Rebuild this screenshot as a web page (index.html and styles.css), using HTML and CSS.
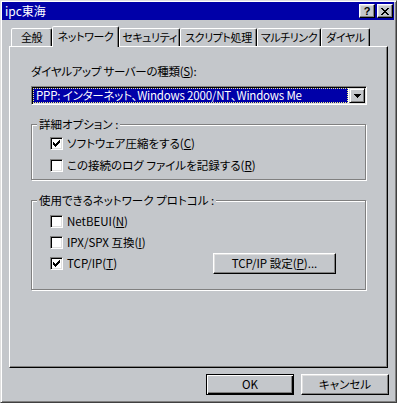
FILE: index.html
```html
<!DOCTYPE html>
<html lang="ja">
<head>
    <meta charset="UTF-8">
    <title>ipc東海</title>
    <link rel="stylesheet" href="styles.css">
</head>
<body>
    <div class="window">
        <div class="titlebar">
            <span class="title">ipc東海</span>
            <div class="title-buttons">
                <button class="tbtn help">?</button>
                <button class="tbtn close">
                    <svg width="8" height="7" viewBox="0 0 8 7">
                        <path d="M0 0h2v1H0z M6 0h2v1H6z M1 1h2v1H1z M5 1h2v1H5z M2 2h4v1H2z M3 3h2v1H3z M2 4h4v1H2z M1 5h2v1H1z M5 5h2v1H5z M0 6h2v1H0z M6 6h2v1H6z" fill="#000"/>
                    </svg>
                </button>
            </div>
        </div>

        <div class="content">
            <div class="tabs">
                <div class="tab">全般</div>
                <div class="tab active">ネットワーク</div>
                <div class="tab">セキュリティ</div>
                <div class="tab">スクリプト処理</div>
                <div class="tab">マルチリンク</div>
                <div class="tab">ダイヤル</div>
            </div>

            <div class="panel">
                <div class="field-label">ダイヤルアップ サーバーの種類(<u>S</u>):</div>
                <div class="combo">
                    <div class="combo-value">PPP: インターネット、Windows 2000/NT、Windows Me</div>
                    <div class="combo-btn">
                        <svg width="7" height="4" viewBox="0 0 7 4">
                            <path d="M0 0h7v1H0z M1 1h5v1H1z M2 2h3v1H2z M3 3h1v1H3z" fill="#000"/>
                        </svg>
                    </div>
                </div>

                <fieldset class="group group-options">
                    <legend>詳細オプション :</legend>
                    <label class="check">
                        <span class="box"><svg width="13" height="13" viewBox="0 0 13 13"><path d="M3 5h1v3H3z M4 6h1v3H4z M5 7h1v3H5z M6 6h1v3H6z M7 5h1v3H7z M8 4h1v3H8z M9 3h1v3H9z" fill="#000"/></svg></span>
                        ソフトウェア圧縮をする(<u>C</u>)
                    </label>
                    <label class="check">
                        <span class="box"></span>
                        この接続のログ ファイルを記録する(<u>R</u>)
                    </label>
                </fieldset>

                <fieldset class="group group-protocols">
                    <legend>使用できるネットワーク プロトコル :</legend>
                    <label class="check">
                        <span class="box"></span>
                        NetBEUI(<u>N</u>)
                    </label>
                    <label class="check">
                        <span class="box"></span>
                        IPX/SPX 互換(<u>I</u>)
                    </label>
                    <div class="check">
                        <span class="box"><svg width="13" height="13" viewBox="0 0 13 13"><path d="M3 5h1v3H3z M4 6h1v3H4z M5 7h1v3H5z M6 6h1v3H6z M7 5h1v3H7z M8 4h1v3H8z M9 3h1v3H9z" fill="#000"/></svg></span>
                        TCP/IP(<u>T</u>)
                        <button class="btn btn-settings">TCP/IP 設定(<u>P</u>)...</button>
                    </div>
                </fieldset>
            </div>

            <div class="actions">
                <button class="btn default">OK</button>
                <button class="btn">キャンセル</button>
            </div>
        </div>
    </div>
</body>
</html>
```

FILE: styles.css
```css
* {
    margin: 0;
    padding: 0;
    box-sizing: border-box;
}

body {
    background: #c4c7cb;
    font-family: "Noto Sans CJK JP", "Liberation Sans", sans-serif;
    font-size: 11.5px;
    color: #000;
    font-feature-settings: "palt";
}

.window {
    width: 397px;
    height: 403px;
    background: #c4c7cb;
    border: 1px solid;
    border-color: #dfdfdf #404040 #404040 #dfdfdf;
    box-shadow: inset 1px 1px #fff, inset -1px -1px #808080;
    padding: 1px 2px 2px 1px;
}

.titlebar {
    height: 18px;
    background: #0000a8;
    color: #fff;
    display: flex;
    align-items: center;
    justify-content: space-between;
    padding: 0 1px 0 3px;
}

.title {
    font-size: 12px;
    line-height: 18px;
}

.title-buttons {
    display: flex;
    gap: 2px;
}

.tbtn {
    width: 16px;
    height: 14px;
    background: #c4c7cb;
    border: 1px solid;
    border-color: #fff #000 #000 #fff;
    box-shadow: inset -1px -1px #808080, inset 1px 1px #dfdfdf;
    display: flex;
    align-items: center;
    justify-content: center;
}

.tbtn.help {
    font-family: "Liberation Sans", sans-serif;
    font-weight: bold;
    font-size: 11px;
    line-height: 12px;
    color: #000;
}

.content {
    padding: 6px 6px 0 7px;
}

.tabs {
    display: flex;
    align-items: flex-end;
    height: 20px;
    padding-left: 2px;
    position: relative;
    z-index: 1;
}

.tab {
    height: 18px;
    line-height: 16px;
    font-size: 11px;
    letter-spacing: -0.4px;
    text-align: center;
    border: 1px solid;
    border-bottom: none;
    border-color: #fff #000 transparent #fff;
    border-radius: 2px 2px 0 0;
    box-shadow: inset -1px 0 #808080;
    background: #c4c7cb;
    white-space: nowrap;
}

.tab:nth-child(1) { width: 41px; }
.tab:nth-child(2) { width: 67px; }
.tab:nth-child(3) { width: 61px; }
.tab:nth-child(4) { width: 77px; }
.tab:nth-child(5) { width: 64px; }
.tab:nth-child(6) { width: 49px; }

.tab.active {
    height: 21px;
    margin-bottom: -1px;
    line-height: 18px;
}

.panel {
    height: 322px;
    border: 1px solid;
    border-color: #fff #000 #000 #fff;
    box-shadow: inset -1px -1px #808080;
    padding: 17px 21px 0 21px;
}

.field-label {
    line-height: 14px;
    letter-spacing: -0.3px;
}

.combo {
    display: flex;
    width: 336px;
    height: 19px;
    margin-top: 8px;
    border: 1px solid;
    border-color: #808080 #fff #fff #808080;
    box-shadow: inset 1px 1px #000, inset -1px -1px #dfdfdf;
    padding: 1px;
    background: #fff;
}

.combo-value {
    flex: 1;
    background: #0000a8;
    color: #fff;
    border: 1px dotted #f0f080;
    margin-right: 1px;
    padding-left: 2px;
    line-height: 13px;
    letter-spacing: -0.2px;
    white-space: nowrap;
}

.combo-btn {
    width: 16px;
    background: #c4c7cb;
    border: 1px solid;
    border-color: #dfdfdf #000 #000 #dfdfdf;
    box-shadow: inset 1px 1px #fff, inset -1px -1px #808080;
    display: flex;
    align-items: center;
    justify-content: center;
}

.group {
    width: 335px;
    border: 1px solid #808080;
    box-shadow: inset 1px 1px #fff, 1px 1px #fff;
    padding: 6px 5px 7px 5px;
    min-width: 0;
}

.group legend {
    padding: 0 2px;
    line-height: 14px;
    background: #c4c7cb;
}

.group-options {
    margin-top: 12px;
}

.group-protocols {
    margin-top: 13px;
    padding-top: 8px;
    padding-bottom: 19px;
    padding-right: 29px;
}

.check {
    display: flex;
    align-items: center;
    height: 13px;
    line-height: 13px;
    margin-left: 13px;
    white-space: nowrap;
}

.check + .check {
    margin-top: 9px;
}

.group-protocols .check + .check {
    margin-top: 8px;
}

.box {
    width: 13px;
    height: 13px;
    flex-shrink: 0;
    background: #fff;
    border: 1px solid;
    border-color: #808080 #fff #fff #808080;
    box-shadow: inset 1px 1px #000, inset -1px -1px #dfdfdf;
    margin-right: 4px;
    position: relative;
}

.box svg {
    position: absolute;
    left: -1px;
    top: -1px;
}

u {
    text-decoration: underline;
    text-underline-offset: 1px;
}

.btn {
    height: 21px;
    background: #c4c7cb;
    border: 1px solid;
    border-color: #fff #000 #000 #fff;
    box-shadow: inset -1px -1px #808080, inset 1px 1px #dfdfdf;
    font-family: inherit;
    font-size: 11.5px;
    font-feature-settings: "palt";
    color: #000;
    line-height: 17px;
}

.btn-settings {
    width: 123px;
    margin: -4px 0 -4px auto;
}

.actions {
    display: flex;
    justify-content: flex-end;
    gap: 7px;
    margin-top: 6px;
    margin-right: -1px;
}

.actions .btn {
    width: 88px;
}

.btn.default {
    border-color: #000;
    box-shadow: inset 1px 1px #fff, inset -1px -1px #000, inset -2px -2px #808080;
}
```
